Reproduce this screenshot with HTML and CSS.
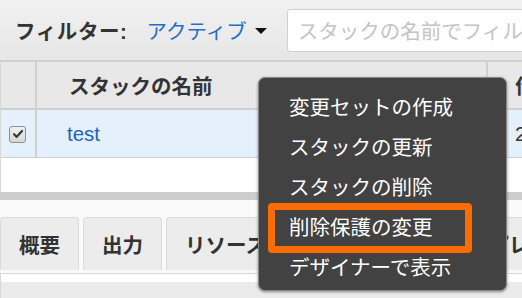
FILE: index.html
```html
<!DOCTYPE html>
<html lang="ja">
<head>
<meta charset="utf-8">
<link rel="stylesheet" href="styles.css">
</head>
<body>
<div class="page">
  <div class="toolbar">
    <span class="filter-label">フィルター:</span>
    <span class="filter-value">アクティブ<span class="caret"></span></span>
    <div class="search">スタックの名前でフィルター</div>
  </div>

  <div class="stack-table">
    <div class="row head">
      <div class="cell check"></div>
      <div class="cell name">スタックの名前</div>
      <div class="cell time">作成時刻</div>
    </div>
    <div class="row selected">
      <div class="cell check"><span class="checkbox"><svg viewBox="0 0 16 16" width="14" height="14"><path d="M3.5 8.3 L6.6 11.2 L12.6 4.6" fill="none" stroke="#3a3a3a" stroke-width="2.6" stroke-linecap="round" stroke-linejoin="round"/></svg></span></div>
      <div class="cell name"><a class="link">test</a></div>
      <div class="cell time">2019-01-10</div>
    </div>
    <div class="empty"></div>
  </div>
  <div class="band"></div>

  <div class="tabs-area">
    <div class="tabs">
      <div class="tab">概要</div>
      <div class="tab">出力</div>
      <div class="tab">リソース</div>
      <div class="tab wide">イベント</div>
      <div class="tab">テンプレート</div>
    </div>
    <div class="tab-panel"></div>
  </div>

  <ul class="menu">
    <li class="menu-item">変更セットの作成</li>
    <li class="menu-item">スタックの更新</li>
    <li class="menu-item">スタックの削除</li>
    <li class="menu-item marked"><span class="highlight"></span>削除保護の変更</li>
    <li class="menu-item">デザイナーで表示</li>
  </ul>
</div>
</body>
</html>
```
FILE: styles.css
```css
html, body {
  margin: 0;
  padding: 0;
}
body {
  width: 522px;
  height: 298px;
  overflow: hidden;
  background: #ffffff;
  font-family: "Liberation Sans", "Noto Sans CJK JP", sans-serif;
  font-size: 20.5px;
  color: #333;
}
.page {
  position: relative;
  width: 522px;
  height: 298px;
  overflow: hidden;
}

/* toolbar */
.toolbar {
  height: 60px;
  display: flex;
  align-items: center;
  padding-left: 15px;
  background: linear-gradient(#f1f1f1, #e6e6e6);
  border-bottom: 2px solid #d0d0d0;
  white-space: nowrap;
}
.filter-label {
  font-weight: bold;
  color: #333;
  letter-spacing: 0.6px;
}
.filter-value {
  margin-left: 19px;
  color: #1f6fc6;
  display: inline-flex;
  align-items: center;
}
.caret {
  display: inline-block;
  width: 0;
  height: 0;
  margin-left: 8px;
  margin-top: 2px;
  border-left: 6px solid transparent;
  border-right: 6px solid transparent;
  border-top: 6px solid #111;
}
.search {
  margin-left: 20px;
  height: 43px;
  width: 300px;
  flex: none;
  box-sizing: border-box;
  background: #fff;
  border: 1px solid #cfcfcf;
  border-radius: 3px;
  padding-left: 10px;
  display: flex;
  align-items: center;
  color: #c4c4c4;
}

/* table */
.stack-table {
  border-left: 1px solid #d8d8d8;
}
.row {
  display: grid;
  grid-template-columns: 36px 451px 40px;
}
.cell {
  display: flex;
  align-items: center;
  border-right: 2px solid #d0d0d0;
  white-space: nowrap;
  overflow: hidden;
}
.cell.time {
  border-right: 0;
  padding-left: 27px;
}
.head {
  height: 46px;
  background: #e8e8e8;
  border-bottom: 2px solid #d0d0d0;
}
.head .cell {
  font-weight: bold;
  color: #333;
}
.head .name {
  padding-left: 32px;
}
.selected {
  height: 47px;
  background: #e4f0fc;
  border-bottom: 1px solid #cfcfcf;
}
.selected .name {
  padding-left: 30px;
}
.selected .time {
  color: #333;
}
.check {
  justify-content: flex-start;
  padding-left: 8px;
}
.checkbox {
  width: 15px;
  height: 15px;
  border: 1px solid #8f8f8f;
  border-radius: 3px;
  background: linear-gradient(#f2f2f2, #d6d6d6);
  display: flex;
  align-items: center;
  justify-content: center;
  margin-top: 1px;
}
.link {
  color: #1f63b8;
}
.empty {
  height: 34px;
}
.band {
  height: 8px;
  background: #cdcdcd;
}

/* tabs */
.tabs-area {
  padding-top: 17px;
  background: #fafafa;
}
.tabs {
  display: flex;
  gap: 4px;
  white-space: nowrap;
}
.tab {
  flex: none;
  height: 53px;
  box-sizing: border-box;
  padding: 0 18px;
  display: flex;
  align-items: center;
  background: #ececec;
  border: 1px solid #dadada;
  border-bottom: 0;
  border-radius: 4px 4px 0 0;
  font-weight: bold;
  color: #333;
}
.tab.wide {
  padding: 0 26px;
}
.tab-panel {
  margin-top: 3px;
  border-top: 1px solid #d8d8d8;
  border-left: 1px solid #d8d8d8;
  background: linear-gradient(#ffffff 0, #ffffff 8px, #ebebeb 8px);
  height: 40px;
}

/* context menu overlay */
.menu {
  position: absolute;
  left: 258px;
  top: 77px;
  width: 249px;
  height: 214px;
  box-sizing: border-box;
  margin: 0;
  padding: 8px 0 0 0;
  list-style: none;
  background: #424242;
  border: 1px solid #8a8a8a;
  border-radius: 7px;
  box-shadow: 0 1px 3px rgba(0, 0, 0, 0.45);
}
.menu-item {
  position: relative;
  height: 40px;
  display: flex;
  align-items: center;
  padding-left: 30px;
  color: #ffffff;
  white-space: nowrap;
}
.highlight {
  position: absolute;
  left: 9px;
  top: -3px;
  width: 204px;
  height: 50px;
  box-sizing: border-box;
  border: 7px solid #fb6d02;
  border-radius: 4px;
}
```
